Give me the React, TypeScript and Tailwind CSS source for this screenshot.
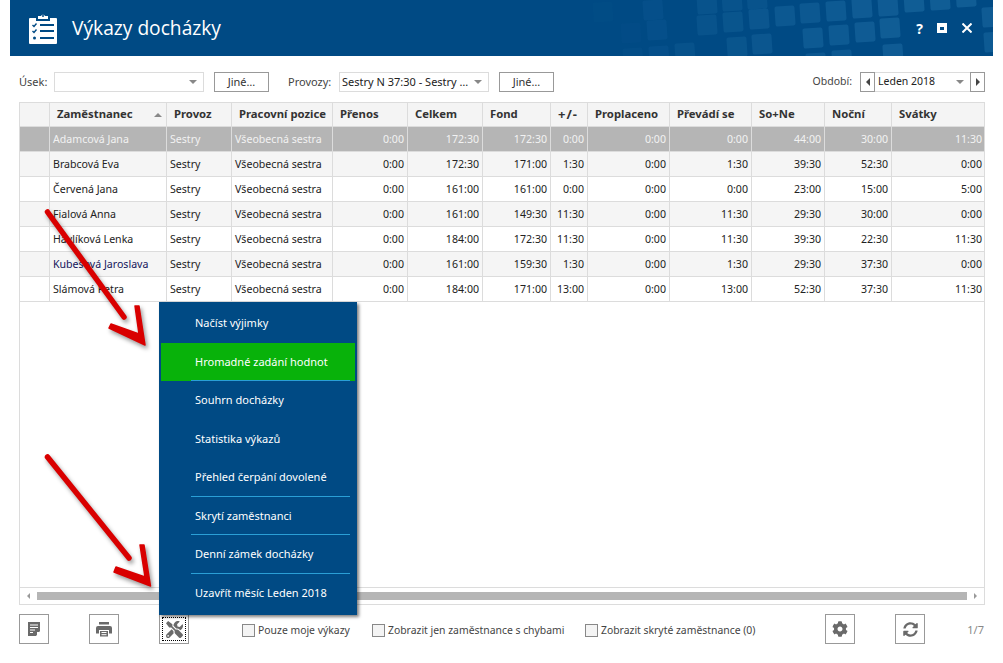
import { FaCog, FaSyncAlt, FaTools } from "react-icons/fa";

const gridCols = "grid grid-cols-[30px_117px_65px_101px_75px_75px_68px_37px_82px_82px_73px_67px_93px]";

const headers = ["", "Zaměstnanec", "Provoz", "Pracovní pozice", "Přenos", "Celkem", "Fond", "+/-", "Proplaceno", "Převádí se", "So+Ne", "Noční", "Svátky"];

const rows = [
  ["Adamcová Jana", "0:00", "172:30", "172:30", "0:00", "0:00", "0:00", "44:00", "30:00", "11:30"],
  ["Brabcová Eva", "0:00", "172:30", "171:00", "1:30", "0:00", "1:30", "39:30", "52:30", "0:00"],
  ["Červená Jana", "0:00", "161:00", "161:00", "0:00", "0:00", "0:00", "23:00", "15:00", "5:00"],
  ["Fialová Anna", "0:00", "161:00", "149:30", "11:30", "0:00", "11:30", "29:30", "30:00", "0:00"],
  ["Havlíková Lenka", "0:00", "184:00", "172:30", "11:30", "0:00", "11:30", "39:30", "22:30", "11:30"],
  ["Kubešová Jaroslava", "0:00", "161:00", "159:30", "1:30", "0:00", "1:30", "29:30", "37:30", "0:00"],
  ["Slámová Petra", "0:00", "184:00", "171:00", "13:00", "0:00", "13:00", "52:30", "37:30", "11:30"],
];

const menu = [
  { label: "Načíst výjimky" },
  { label: "Hromadné zadání hodnot", active: true, line: true },
  { label: "Souhrn docházky" },
  { label: "Statistika výkazů" },
  { label: "Přehled čerpání dovolené", line: true },
  { label: "Skrytí zaměstnanci", line: true },
  { label: "Denní zámek docházky", line: true },
  { label: "Uzavřít měsíc Leden 2018" },
];

// x, y, opacity - pattern in the header, right side
const squares = [
  [113, 2, 0.06], [163, 0, 0.2], [141, 23, 0.07], [167, 20, 0.2], [143, 48, 0.1], [169, 46, 0.2], [195, 43, 0.25],
  [217, 15, 0.3], [243, 12, 0.35], [269, 9, 0.4], [295, 6, 0.45], [320, 3, 0.45], [346, 1, 0.5], [372, -2, 0.55],
  [398, -4, 0.55], [424, -8, 0.6], [450, -10, 0.6], [476, -13, 0.6], [502, 7, 0.55], [217, -6, 0.3], [242, -9, 0.3], [267, -11, 0.3],
  [247, 37, 0.35], [272, 34, 0.4], [323, 28, 0.5], [349, 25, 0.5], [375, 22, 0.55], [400, 18, 0.6], [403, 44, 0.55], [352, 50, 0.45], [326, 53, 0.4], [504, 32, 0.5],
];

function Combo({ text, className }: { text?: string; className: string }) {
  return (
    <div className={"flex h-5 items-center justify-between border border-[#dcdcdc] bg-white pl-[2px] pr-[6px] text-[#222] " + className}>
      <span className="truncate">{text}</span>
      <span className="h-0 w-0 border-x-[4px] border-t-[4px] border-x-transparent border-t-[#888]" />
    </div>
  );
}

function JineBtn() {
  return <div className="flex h-5 w-[55px] items-center justify-center border border-[#999] bg-white text-[#333]">Jiné…</div>;
}

function ToolBtn({ children, className = "" }: { children: React.ReactNode; className?: string }) {
  return <div className={"flex h-[30px] w-[30px] shrink-0 items-center justify-center border border-[#999] bg-white text-[#6a6a6a] " + className}>{children}</div>;
}

function Check({ label, className }: { label: string; className: string }) {
  return (
    <div className={"flex shrink-0 items-center gap-[3px] pt-[4px] text-[10.4px] text-[#444] " + className}>
      <span className="h-[13px] w-[13px] border border-[#888] bg-[#f4f4f4]" />
      <span>{label}</span>
    </div>
  );
}

function Arrow({ x1, y1, x2, y2, head }: { x1: number; y1: number; x2: number; y2: number; head: string }) {
  return (
    <g>
      <line x1={x1} y1={y1} x2={x2} y2={y2} stroke="#d90000" strokeWidth="5.5" strokeLinecap="round" />
      <polygon points={head} fill="#d90000" stroke="#d90000" strokeWidth="1.5" strokeLinejoin="round" />
    </g>
  );
}

export default function App() {
  return (
    <div className="relative h-[663px] w-[1003px] overflow-hidden bg-white px-[10px] font-['Noto_Sans',sans-serif] text-[11px]">
      {/* title bar */}
      <div className="relative flex h-14 items-center overflow-hidden bg-[#004a84] text-white">
        <svg className="absolute right-0 top-0 h-14 w-[513px]" viewBox="0 0 513 56">
          {squares.map(([x, y, o], i) => (
            <rect key={i} x={x} y={y} width="20" height="20" rx="2" fill="#3f97c9" opacity={o * 0.42} transform={`rotate(-4 ${x + 10} ${y + 10})`} />
          ))}
        </svg>
        <svg className="ml-[18px] h-[34px] w-[30px]" viewBox="0 0 30 34">
          <path d="M2 7h6v3h14V7h6a1 1 0 0 1 1 1v24a1 1 0 0 1-1 1H2a1 1 0 0 1-1-1V8a1 1 0 0 1 1-1z" fill="#fff" />
          <path d="M10 8V5h3a2.3 2.3 0 0 1 4 0h3v3z" fill="#fff" />
          <circle cx="15" cy="5" r="1" fill="#004a84" />
          <path d="M4.5 14l1.5 1.5 2.5-3M4.5 20l1.5 1.5 2.5-3" fill="none" stroke="#004a84" strokeWidth="1.4" />
          <circle cx="6.5" cy="27" r="1.5" fill="#004a84" />
          <path d="M12 14h14M12 20h14M12 27h14" stroke="#004a84" strokeWidth="1.8" />
        </svg>
        <span className="relative ml-[14px] font-['Open_Sans',sans-serif] text-[19.2px]">Výkazy docházky</span>
        <div className="relative ml-auto flex items-center pr-[21px]">
          <span className="mr-[14px] text-[14px] font-bold">?</span>
          <span className="mr-[15px] h-[10px] w-[10px] border-x-[3px] border-b-[3px] border-t-[4px] border-white" />
          <svg className="h-[10px] w-[10px]" viewBox="0 0 10 10">
            <path d="M0.5 0.5l9 9M9.5 0.5l-9 9" stroke="#fff" strokeWidth="2" />
          </svg>
        </div>
      </div>

      {/* filters */}
      <div className="ml-[9px] mt-4 flex h-5 w-[966px] items-center text-[#444]">
        <span className="w-[35px]">Úsek:</span>
        <Combo className="w-[150px]" />
        <div className="ml-[10px]"><JineBtn /></div>
        <span className="ml-[19px] w-[51px]">Provozy:</span>
        <Combo className="w-[150px]" text="Sestry N 37:30 - Sestry …" />
        <div className="ml-[10px]"><JineBtn /></div>
        <span className="ml-auto mr-[8px] text-[10.5px]">Období:</span>
        <div className="flex h-5 w-[15px] items-center justify-center border border-[#999]">
          <span className="h-0 w-0 border-y-[4px] border-r-[4px] border-y-transparent border-r-[#444]" />
        </div>
        <Combo className="w-[95px] border-x-0 pl-[3px] text-[10.5px]" text="Leden 2018" />
        <div className="flex h-5 w-[15px] items-center justify-center border border-[#999]">
          <span className="h-0 w-0 border-y-[4px] border-l-[4px] border-y-transparent border-l-[#444]" />
        </div>
      </div>

      {/* table */}
      <div className="ml-[9px] mt-[10px] flex h-[503px] w-[966px] flex-col border border-[#dcdcdc] text-[10.6px]">
        <div className={gridCols + " h-[24px] shrink-0 border-b border-[#dcdcdc] bg-[#f4f4f4] text-[11.3px] font-bold text-[#333]"}>
          {headers.map((h, i) => (
            <div key={i} className="relative flex items-center border-r border-[#dcdcdc] px-[7px] last:border-r-0">
              <span className={"whitespace-nowrap " + (h === "+/-" ? "text-[13px] tracking-[1px]" : "")}>{h}</span>
              {i === 1 && <span className="absolute right-[4px] h-0 w-0 border-x-[4px] border-b-[4px] border-x-transparent border-b-[#888]" />}
            </div>
          ))}
        </div>
        {rows.map((r, ri) => {
          const selected = ri === 0;
          const tone = selected ? "bg-[#b5b5b5] text-[#f2f2f2]" : ri % 2 === 1 ? "bg-[#f5f5f5] text-[#222]" : "bg-white text-[#222]";
          const nameTone = ri === 5 ? "text-[#14145a]" : "";
          return (
            <div key={r[0]} className={gridCols + " h-[25px] shrink-0 border-b border-[#dcdcdc] " + tone}>
              <div className="border-r border-[#dcdcdc]" />
              <div className={"flex items-center border-r border-[#dcdcdc] px-[3px] pt-[2px] " + nameTone}>{r[0]}</div>
              <div className="flex items-center border-r border-[#dcdcdc] px-[3px] pt-[2px]">Sestry</div>
              <div className="flex items-center border-r border-[#dcdcdc] px-[3px] pt-[2px]">Všeobecná sestra</div>
              {r.slice(1).map((v, i) => (
                <div key={i} className="flex items-center justify-end border-r border-[#dcdcdc] px-[3px] pt-[2px] last:border-r-0">{v}</div>
              ))}
            </div>
          );
        })}
        {/* scrollbar */}
        <div className="mt-auto flex h-[17px] items-center border-t border-[#dcdcdc] pl-[7px] pr-[7px]">
          <span className="h-0 w-0 border-y-[3px] border-r-[3px] border-y-transparent border-r-[#999]" />
          <div className="mx-[7px] h-2 flex-1 bg-[#b5b5b5]" />
          <span className="h-0 w-0 border-y-[3px] border-l-[3px] border-y-transparent border-l-[#999]" />
        </div>
      </div>

      {/* bottom bar */}
      <div className="ml-[9px] mt-[9px] flex h-[30px] w-[966px] items-center">
        <ToolBtn>
          <svg className="h-[14px] w-[14px]" viewBox="0 0 14 14">
            <path d="M1 0h12v9l-4 5H1z" fill="#6a6a6a" />
            <path d="M3 3h8M3 5.5h8M3 8h5M3 10.5h3" stroke="#fff" strokeWidth="1" />
            <path d="M10 10h4l-4 4z" fill="#fff" />
          </svg>
        </ToolBtn>
        <ToolBtn className="ml-10">
          <svg className="h-4 w-4" viewBox="0 0 16 16">
            <path d="M3 1h10v2.5H3z" fill="#6a6a6a" />
            <path d="M2 5h12a2 2 0 0 1 2 2v5.5h-3V9H3v3.5H0V7a2 2 0 0 1 2-2z" fill="#6a6a6a" />
            <path d="M4 10h8v5.5H4z" fill="#6a6a6a" />
            <path d="M5.5 11.5h5M5.5 13.7h5" stroke="#fff" strokeWidth="1" />
          </svg>
        </ToolBtn>
        <ToolBtn className="relative ml-10">
          <span className="absolute inset-[2px] border border-dotted border-black" />
          <FaTools size={17} />
        </ToolBtn>
        <Check className="ml-[53px] w-[130px]" label="Pouze moje výkazy" />
        <Check className="w-[213px]" label="Zobrazit jen zaměstnance s chybami" />
        <Check className="w-[200px]" label="Zobrazit skryté zaměstnance (0)" />
        <ToolBtn className="ml-auto"><FaCog size={16} /></ToolBtn>
        <ToolBtn className="ml-10"><FaSyncAlt size={15} /></ToolBtn>
        <span className="ml-[42px] mr-[1px] pt-[3px] text-[#888]">1/7</span>
      </div>

      {/* popup menu */}
      <div className="absolute left-[159px] top-[302px] h-[313px] w-[198px] bg-[#004a84] px-[2px] pt-[2px] text-[11px] text-white shadow-[2px_2px_3px_rgba(0,0,0,0.5)]">
        {menu.map((m) => (
          <div key={m.label} className={"relative flex h-[38.5px] items-center pl-[34px] " + (m.active ? "bg-[#08b20a]" : "")}>
            {m.label}
            {m.line && <span className="absolute bottom-0 left-[30px] right-[5px] h-px bg-[#2a9fd6]" />}
          </div>
        ))}
      </div>

      {/* red arrows */}
      <svg className="pointer-events-none absolute left-0 top-0 h-[663px] w-[1003px] drop-shadow-[2px_3px_2px_rgba(0,0,0,0.4)]" viewBox="0 0 1003 663">
        <Arrow x1={47.5} y1={212} x2={124} y2={317} head="135,306 139,306 145,345 109,328 111,324 139,334" />
        <Arrow x1={47.5} y1={457} x2={129} y2={558} head="140,545 144,545 150.5,586 114,572 116,567 145,577" />
      </svg>
    </div>
  );
}
